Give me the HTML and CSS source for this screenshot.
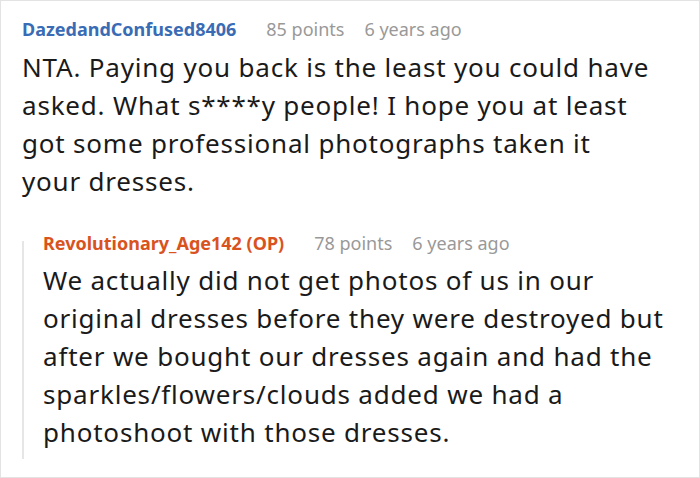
FILE: index.html
```html
<!DOCTYPE html>
<html lang="en">
<head>
<meta charset="utf-8">
<link rel="stylesheet" href="styles.css">
</head>
<body>
<div class="thread">
  <div class="comment">
    <div class="meta">
      <span class="user user-blue">DazedandConfused8406</span>
      <span class="info">85 points</span>
      <span class="info">6 years ago</span>
    </div>
    <p class="text text-main">NTA. Paying you back is the least you could have asked. What s****y people! I hope you at least got some professional photographs taken it your dresses.</p>
    <div class="reply">
      <div class="meta">
        <span class="user user-orange">Revolutionary_Age142 (OP)</span>
        <span class="info">78 points</span>
        <span class="info">6 years ago</span>
      </div>
      <p class="text">We actually did not get photos of us in our original dresses before they were destroyed but after we bought our dresses again and had the sparkles/flowers/clouds added we had a photoshoot with those dresses.</p>
    </div>
  </div>
</div>
</body>
</html>
```

FILE: styles.css
```css
* { box-sizing: border-box; }
html, body { margin: 0; padding: 0; background: #fff; }
body { font-family: "Noto Sans", "Open Sans", sans-serif; }
.thread {
  width: 700px;
  height: 478px;
  border: 1px solid #e3e3e3;
  padding: 16px 20px 0 21px;
  overflow: hidden;
}
.meta {
  display: flex;
  align-items: baseline;
  font-size: 18px;
  line-height: 24px;
}
.user { font-weight: 700; margin-right: 30px; }
.user-blue { color: #3a6bb5; }
.user-orange { color: #d9531e; }
.info { color: #999; margin-right: 20px; }
.text {
  margin: 6px 0 0 0;
  font-size: 26px;
  line-height: 38px;
  letter-spacing: 0.8px;
  color: #1a1a1a;
}
.text-main { margin: 7px 25px 0 0; }
.reply {
  margin-top: 31px;
  padding: 0 0 8px 21px;
  background: linear-gradient(#e6e6e6, #e6e6e6) no-repeat 0 10px / 2px 100%;
}
```
